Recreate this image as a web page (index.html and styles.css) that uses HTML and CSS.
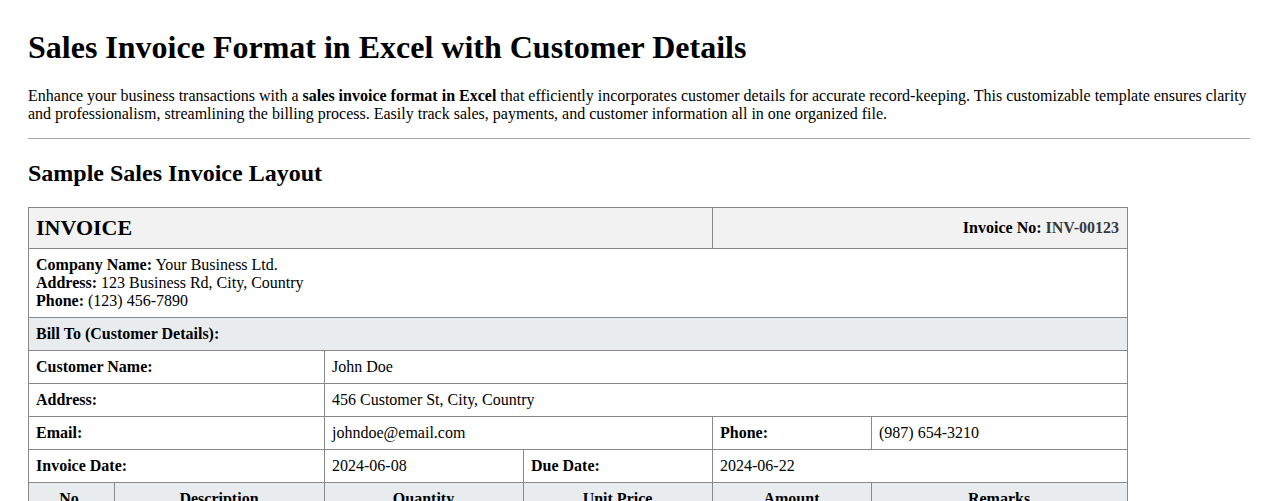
FILE: index.html
```html
<!DOCTYPE html>
<html lang="en">
<head>
<meta charset="utf-8">
<title>Sales Invoice Format in Excel with Customer Details</title>
<link rel="stylesheet" href="styles.css">
</head>
<body>
<div class="page">
  <h1 class="title">Sales Invoice Format in Excel with Customer Details</h1>
  <p class="intro">Enhance your business transactions with a <strong>sales invoice format in Excel</strong> that efficiently incorporates customer details for accurate record-keeping. This customizable template ensures clarity and professionalism, streamlining the billing process. Easily track sales, payments, and customer information all in one organized file.</p>
  <hr class="rule">
  <h2 class="subtitle">Sample Sales Invoice Layout</h2>
  <table class="invoice">
    <colgroup>
      <col class="c1"><col class="c2"><col class="c3"><col class="c4"><col class="c5"><col class="c6">
    </colgroup>
    <tr class="head-row">
      <td colspan="4"><span class="inv-title">INVOICE</span></td>
      <td colspan="2" class="right"><strong>Invoice No:</strong> <strong class="inv-no">INV-00123</strong></td>
    </tr>
    <tr>
      <td colspan="6"><strong>Company Name:</strong> Your Business Ltd.<br><strong>Address:</strong> 123 Business Rd, City, Country<br><strong>Phone:</strong> (123) 456-7890</td>
    </tr>
    <tr class="section">
      <td colspan="6"><strong>Bill To (Customer Details):</strong></td>
    </tr>
    <tr>
      <td colspan="2"><strong>Customer Name:</strong></td>
      <td colspan="4">John Doe</td>
    </tr>
    <tr>
      <td colspan="2"><strong>Address:</strong></td>
      <td colspan="4">456 Customer St, City, Country</td>
    </tr>
    <tr>
      <td colspan="2"><strong>Email:</strong></td>
      <td colspan="2">johndoe@email.com</td>
      <td><strong>Phone:</strong></td>
      <td>(987) 654-3210</td>
    </tr>
    <tr>
      <td colspan="2"><strong>Invoice Date:</strong></td>
      <td>2024-06-08</td>
      <td><strong>Due Date:</strong></td>
      <td colspan="2">2024-06-22</td>
    </tr>
    <tr class="cols">
      <th>No.</th>
      <th>Description</th>
      <th>Quantity</th>
      <th>Unit Price</th>
      <th>Amount</th>
      <th>Remarks</th>
    </tr>
    <tr>
      <td>1</td>
      <td>Product A</td>
      <td>2</td>
      <td>$50.00</td>
      <td>$100.00</td>
      <td></td>
    </tr>
  </table>
</div>
</body>
</html>
```
FILE: styles.css
```css
html, body {
  margin: 0;
  padding: 0;
  background: #fff;
}
body {
  font-family: "Liberation Serif", "Times New Roman", serif;
  font-size: 16px;
  color: #000;
}
.page {
  padding: 29px 28px 28px 28px;
}
.title {
  font-size: 32px;
  font-weight: bold;
  margin: 0 0 21px 0;
}
.intro {
  margin: 0 0 15px 0;
  line-height: 18px;
}
.rule {
  border: 0;
  border-top: 1px solid #aaa;
  margin: 0 0 21px 0;
}
.subtitle {
  font-size: 24px;
  margin: 0 0 20px 0;
}
.invoice {
  border-collapse: collapse;
  width: 1100px;
  line-height: 18px;
}
.invoice td, .invoice th {
  border: 1px solid #888;
  padding: 7px 8px 7px 7px;
  text-align: left;
  vertical-align: middle;
}
.c1 { width: 86px; }
.c2 { width: 210px; }
.c3 { width: 199px; }
.c4 { width: 189px; }
.c5 { width: 159px; }
.c6 { width: 256px; }
.head-row td {
  background: #f2f2f2;
  height: 26px;
}
.inv-title {
  font-size: 22px;
  font-weight: bold;
  line-height: 26px;
}
.right {
  text-align: right !important;
}
.inv-no {
  color: #3a3a3a;
}
.section td {
  background: #e9ecef;
}
.invoice th {
  background: #e9ecef;
  text-align: center;
  font-weight: bold;
}
```
